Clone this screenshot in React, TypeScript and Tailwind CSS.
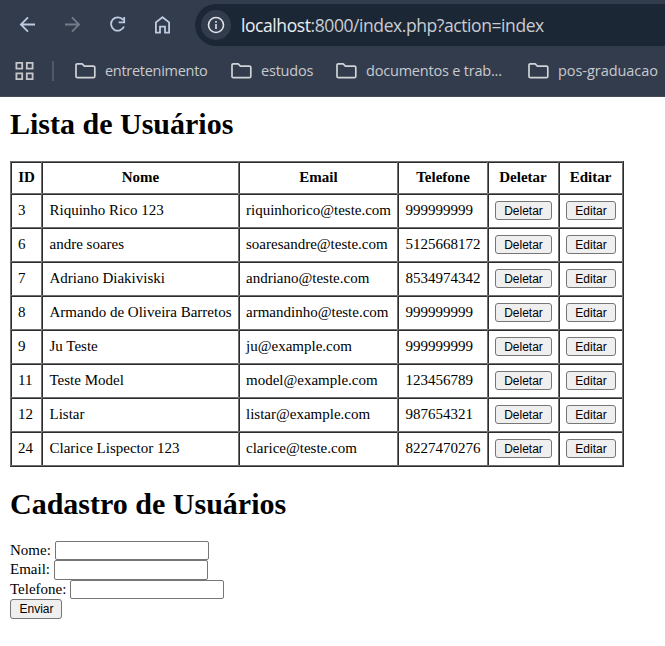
import React from "react";

const users = [
  ["3", "Riquinho Rico 123", "riquinhorico@teste.com", "999999999"],
  ["6", "andre soares", "soaresandre@teste.com", "5125668172"],
  ["7", "Adriano Diakiviski", "andriano@teste.com", "8534974342"],
  ["8", "Armando de Oliveira Barretos", "armandinho@teste.com", "999999999"],
  ["9", "Ju Teste", "ju@example.com", "999999999"],
  ["11", "Teste Model", "model@example.com", "123456789"],
  ["12", "Listar", "listar@example.com", "987654321"],
  ["24", "Clarice Lispector 123", "clarice@teste.com", "8227470276"],
];

const paddings = ["pl-[7px]", "pl-[7.5px]", "pl-[7px]", "pl-[7.5px]"];

const cell =
  "border-l border-t border-[#6e6e6e] shadow-[inset_1px_1px_0_#2c2c2c] flex items-center whitespace-nowrap";
const button =
  "rounded-[3px] border border-[#767676] bg-[#efefef] text-center font-['Liberation_Sans',Arial,sans-serif] text-[12px] leading-[18px] text-black";

function Folder({ label, className }: { label: string; className: string }) {
  return (
    <div className={`flex shrink-0 items-center ${className}`}>
      <svg className="shrink-0" width="21" height="16" viewBox="0 0 21 16" fill="none" stroke="#d2d3d6" strokeWidth="1.7" strokeLinejoin="round">
        <path d="M1 2.2Q1 0.9 2.3 0.9H7.2L9.4 3.1H18.4Q19.8 3.1 19.8 4.5V13.2Q19.8 14.6 18.4 14.6H2.3Q1 14.6 1 13.2Z" />
      </svg>
      <span className="ml-[9px] whitespace-nowrap">{label}</span>
    </div>
  );
}

function Browser() {
  return (
    <header className="h-[97px] overflow-hidden border-b border-[#454b55] bg-[#323c4d] font-['Open_Sans','Noto_Sans',sans-serif]">
      <div className="flex h-[50px] items-center pl-[19px]">
        <svg className="shrink-0" width="156" height="20" viewBox="0 0 156 20" fill="none" stroke="#bccbe2" strokeWidth="1.8">
          <path d="M16 9.5H2.4M9 2.4L1.9 9.5L9 16.6" />
          <path stroke="#737c89" d="M46 9.5H59.6M53 2.4L60.1 9.5L53 16.6" />
          <path d="M104.1 4.9A6.7 6.7 0 1 0 105 11.5M105.2 2.1V7.3H99.6" />
          <path d="M136.9 7.4L143.5 2.2L150.1 7.4V17.7H146V11.6H141V17.7H136.9Z" />
        </svg>
        <div className="ml-5 flex h-[42px] w-[480px] shrink-0 items-center rounded-l-full bg-[#1c2736] pl-[6px]">
          <div className="flex size-[30px] items-center justify-center rounded-full bg-[#323c4d]">
            <svg width="18" height="18" viewBox="0 0 18 18" fill="none" stroke="#e2e3e6" strokeWidth="1.6">
              <circle cx="9" cy="9" r="7.5" />
              <path d="M9 8V13M9 5V6.7" />
            </svg>
          </div>
          <div className="ml-[10px] whitespace-nowrap pt-px text-[17.5px] tracking-[-0.42px] text-[#c9ccd1]">
            <span className="text-[#eceef1]">localhost</span>:8000/index.php?action=index
          </div>
        </div>
      </div>
      <div className="flex h-[42px] items-center text-[14.5px] tracking-[-0.2px] text-[#c8cacd]">
        <svg className="ml-[15px] shrink-0" width="20" height="20" viewBox="0 0 20 20" fill="none" stroke="#c6c7ca" strokeWidth="1.8">
          <path d="M1.4 1.9H7.2V7.7H1.4ZM11.8 1.9H17.6V7.7H11.8ZM1.4 12.3H7.2V18.1H1.4ZM11.8 12.3H17.6V18.1H11.8Z" />
        </svg>
        <div className="ml-[17px] h-5 w-[2px] shrink-0 bg-[#4d596c]" />
        <Folder label="entretenimento" className="ml-[21px] w-[156px] tracking-[-0.28px]" />
        <Folder label="estudos" className="w-[105px]" />
        <Folder label="documentos e trab..." className="w-[192px]" />
        <Folder label="pos-graduacao" className="w-[150px] tracking-[-0.05px]" />
      </div>
    </header>
  );
}

export default function App() {
  return (
    <div className="h-[646px] w-[665px] overflow-hidden bg-white font-['Liberation_Serif','Times_New_Roman',serif] text-[15px] text-black">
      <Browser />
      <main className="pl-[10px] pt-[10px]">
        <h1 className="h-[54px] text-[30px] font-bold leading-[34px]">Lista de Usuários</h1>
        <div className="w-[614px] border-b border-r border-[#2c2c2c]">
          <div className="border-b border-r border-[#6e6e6e]">
            <div className="grid h-8 grid-cols-[31px_197px_159px_90px_71px_64px] font-bold">
              {["ID", "Nome", "Email", "Telefone", "Deletar", "Editar"].map((h, i) => (
                <div key={h} className={`${cell} justify-center ${i < 4 ? "pl-px" : ""}`}>{h}</div>
              ))}
            </div>
            {users.map((u) => (
              <div key={u[0]} className="grid h-[34px] grid-cols-[31px_197px_159px_90px_71px_64px]">
                {u.map((v, i) => (
                  <div key={i} className={`${cell} ${paddings[i]}`}>{v}</div>
                ))}
                <div className={`${cell} pl-[7px]`}><button className={`${button} h-[19px] w-[57px]`}>Deletar</button></div>
                <div className={`${cell} pl-[7px]`}><button className={`${button} h-[19px] w-[50px]`}>Editar</button></div>
              </div>
            ))}
          </div>
        </div>
        <h1 className="h-[54px] pt-5 text-[30px] font-bold leading-[34px]">Cadastro de Usuários</h1>
        <form className="pt-5">
          {[["Nome:", "h-[19px]"], ["Email:", "h-5"], ["Telefone:", "h-[19px]"]].map(([label, h]) => (
            <div key={label} className={`flex items-start ${h}`}>
              <label className="leading-[19px]">{label}</label>
              <input className={`ml-1 w-[154px] rounded-[2px] border border-[#767676] bg-white ${h}`} />
            </div>
          ))}
          <button type="button" className={`${button} block h-5 w-[52px] pl-px`}>Enviar</button>
        </form>
      </main>
    </div>
  );
}
